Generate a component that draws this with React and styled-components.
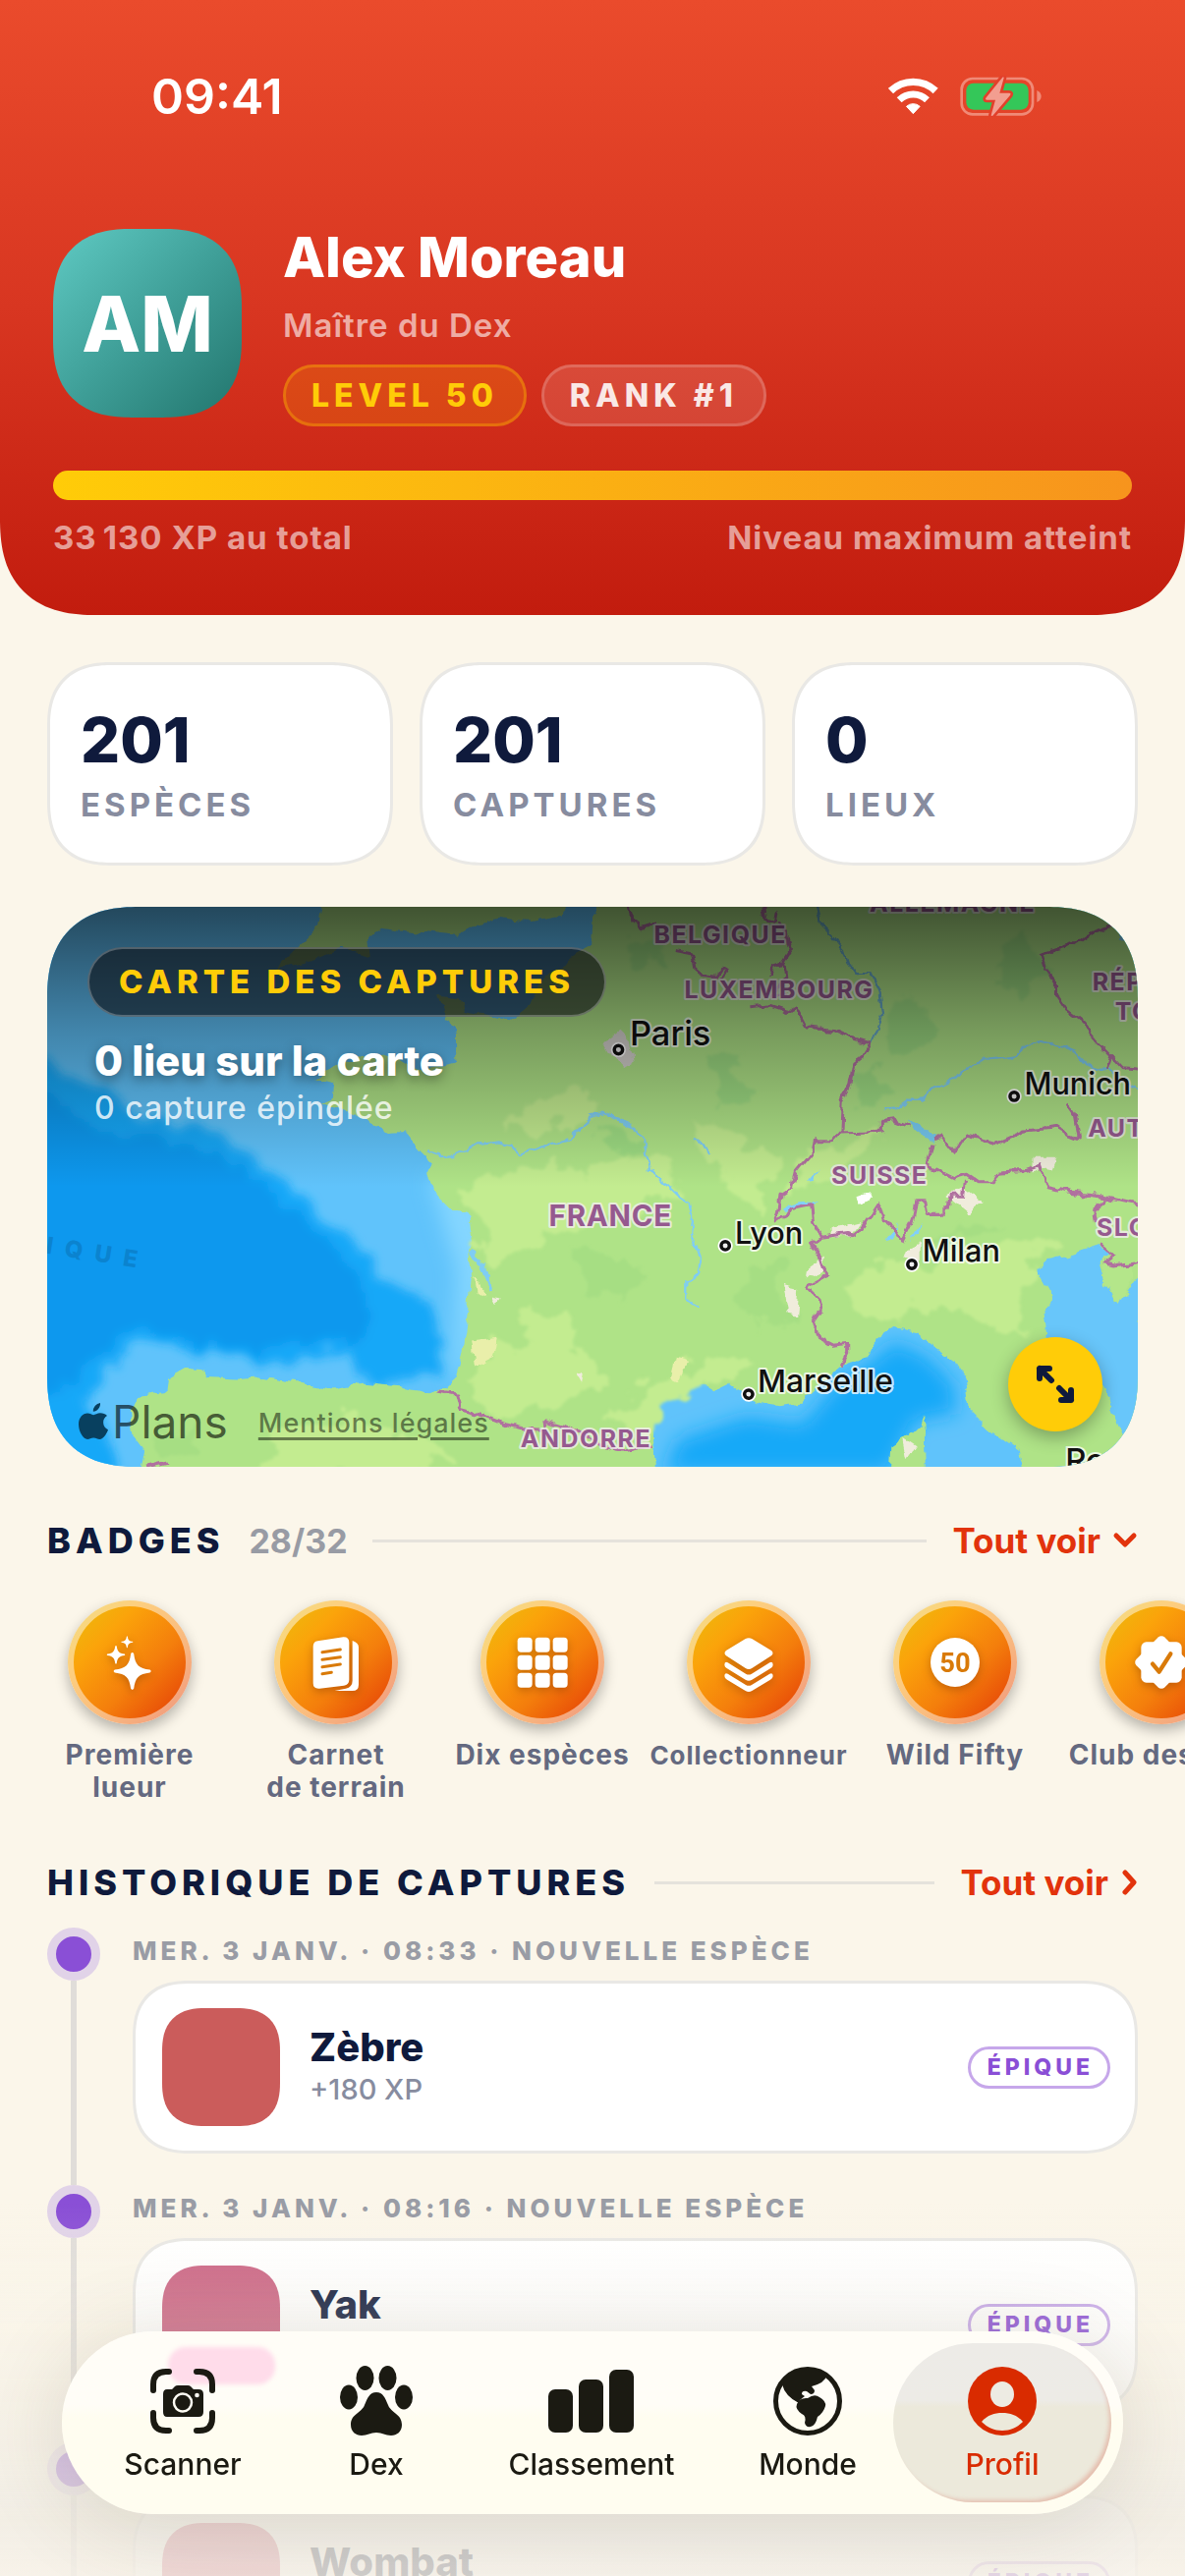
import React from "react";
import styled, { createGlobalStyle, css } from "styled-components";

const ink = "#0f1a3c";
const red = "#e2330c";
const purple = "#8a4fd6";
const cream = "#fbf6ea";

const smooth = (plain, continuous) => css`
  border-radius: ${plain}px;
  @supports (corner-shape: superellipse(1.3)) {
    border-radius: ${continuous}px;
    corner-shape: superellipse(1.3);
  }
`;

const GlobalStyle = createGlobalStyle`
  *, *::before, *::after { box-sizing: border-box; }
  body {
    margin: 0;
    background: ${cream};
    color: ${ink};
    font-family: Inter, "Liberation Sans", sans-serif;
  }
  button { font: inherit; border: 0; padding: 0; background: none; color: inherit; cursor: pointer; }
  a { color: inherit; text-decoration: none; }
  h1, h2, h3, p, ul, ol, dl, dd { margin: 0; padding: 0; font-weight: inherit; list-style: none; }
  svg { display: block; flex: none; }
`;

const Screen = styled.div`
  height: 100vh;
  overflow: hidden;
  background: ${cream};
`;

/* ---------- header ---------- */

const Header = styled.header`
  padding: 0 54px 61px;
  color: #fff;
  background: linear-gradient(180deg, #ea4b2c 0%, #d83621 50%, #c21c0e 100%);
  border-radius: 0 0 84px 84px;
  @supports (corner-shape: superellipse(1.3)) {
    border-radius: 0 0 98px 98px;
    corner-shape: superellipse(1.3);
  }
`;

const StatusBar = styled.div`
  display: flex;
  justify-content: space-between;
  align-items: center;
  height: 196px;
  padding: 0 92px 0 100px;
`;

const Clock = styled.time`
  font-size: 50px;
  font-weight: 600;
`;

const StatusIcons = styled.div`
  display: flex;
  align-items: center;
  gap: 22px;
`;

const Identity = styled.div`
  display: flex;
  align-items: flex-start;
  gap: 42px;
  margin-top: 37px;
`;

const Avatar = styled.div`
  display: grid;
  place-items: center;
  width: 192px;
  height: 192px;
  font-size: 78px;
  font-weight: 800;
  background: linear-gradient(135deg, #5fcac3 0%, #3f9f98 50%, #22756d 100%);
  ${smooth(66, 80)}
`;

const IdentityText = styled.div`
  display: flex;
  flex-direction: column;
  gap: 22px;
`;

const Name = styled.h1`
  font-size: 56px;
  font-weight: 800;
  line-height: 58px;
`;

const Title = styled.p`
  font-size: 33px;
  font-weight: 600;
  line-height: 36px;
  letter-spacing: 1px;
  color: rgba(255, 255, 255, 0.6);
`;

const Pills = styled.div`
  display: flex;
  gap: 15px;
`;

const Pill = styled.span`
  padding: 0 26px;
  font-size: 32px;
  font-weight: 800;
  line-height: 57px;
  letter-spacing: 5px;
  border-radius: 31px;
  border: 3px solid ${(p) => (p.$gold ? "rgba(255,190,0,.35)" : "rgba(255,255,255,.18)")};
  background: ${(p) => (p.$gold ? "rgba(255,190,0,.18)" : "rgba(255,255,255,.12)")};
  color: ${(p) => (p.$gold ? "#ffcc08" : "rgba(255,255,255,.88)")};
`;

const XpBar = styled.div`
  height: 30px;
  margin-top: 45px;
  border-radius: 15px;
  background: linear-gradient(90deg, #ffcc08, #f7941d);
`;

const XpLegend = styled.div`
  display: flex;
  justify-content: space-between;
  margin-top: 20px;
  font-size: 33px;
  font-weight: 700;
  line-height: 36px;
  letter-spacing: 1px;
  color: rgba(255, 255, 255, 0.58);
`;

/* ---------- content ---------- */

const Content = styled.main`
  display: flex;
  flex-direction: column;
  padding: 48px 48px 0;
`;

const Stats = styled.dl`
  display: grid;
  grid-template-columns: repeat(3, 1fr);
  gap: 27px;
`;

const panel = css`
  background: #fff;
  border: 3px solid #e9e8e5;
`;

const StatCard = styled.div`
  display: flex;
  flex-direction: column-reverse;
  justify-content: center;
  gap: 14px;
  height: 207px;
  padding: 4px 31px 0;
  ${panel}
  ${smooth(56, 66)}
`;

const StatValue = styled.dd`
  font-size: 63px;
  font-weight: 800;
  line-height: 64px;
`;

const StatLabel = styled.dt`
  font-size: 33px;
  font-weight: 700;
  line-height: 40px;
  letter-spacing: 4px;
  color: #878c9f;
`;

const MapCard = styled.section`
  position: relative;
  height: 570px;
  margin-top: 42px;
  overflow: hidden;
  background: #5fc3fb;
  ${smooth(78, 94)}
`;

const MapArt = styled.svg`
  width: 100%;
  height: 100%;
`;

const MapOverlay = styled.div`
  position: absolute;
  inset: 0;
  display: flex;
  flex-direction: column;
  justify-content: space-between;
  padding: 41px 36px 25px 32px;
  background: linear-gradient(180deg, rgba(0, 0, 0, 0.63) 0%, rgba(0, 0, 0, 0.32) 22%, rgba(0, 0, 0, 0) 50%);
`;

const MapHeading = styled.div`
  display: flex;
  flex-direction: column;
  align-items: flex-start;
  color: #fff;
`;

const MapTag = styled.h2`
  margin-left: 9px;
  padding: 0 30px;
  font-size: 33px;
  font-weight: 800;
  line-height: 67px;
  letter-spacing: 5px;
  color: #ffcc08;
  background: rgba(12, 14, 18, 0.6);
  border: 2px solid rgba(255, 255, 255, 0.25);
  border-radius: 36px;
`;

const MapTitle = styled.p`
  margin: 20px 16px 0;
  font-size: 42px;
  font-weight: 800;
  line-height: 50px;
  text-shadow: 0 4px 12px rgba(0, 0, 0, 0.4);
`;

const MapSub = styled.p`
  margin: 0 16px;
  font-size: 32px;
  font-weight: 500;
  line-height: 46px;
  letter-spacing: 1px;
  color: rgba(255, 255, 255, 0.8);
`;

const MapFooter = styled.div`
  display: flex;
  align-items: flex-end;
`;

const MapsBrand = styled.span`
  display: flex;
  align-items: center;
  gap: 4px;
  font-size: 46px;
  line-height: 42px;
  color: rgba(0, 0, 0, 0.6);
`;

const LegalLink = styled.a`
  margin-left: 31px;
  font-size: 27px;
  line-height: 38px;
  font-weight: 500;
  letter-spacing: 1px;
  text-decoration: underline;
  text-decoration-thickness: 3px;
  text-underline-offset: 5px;
  color: rgba(0, 0, 0, 0.48);
`;

const ExpandButton = styled.button`
  display: grid;
  place-items: center;
  width: 96px;
  height: 96px;
  margin: 0 0 11px auto;
  border-radius: 50%;
  color: ${ink};
  background: #ffcc08;
  box-shadow: 0 6px 18px rgba(0, 0, 0, 0.3);
`;

/* ---------- sections ---------- */

const SectionHead = styled.div`
  display: flex;
  align-items: center;
  height: 44px;
  margin-top: ${(p) => p.$top}px;
`;

const SectionTitle = styled.h2`
  font-size: 36px;
  font-weight: 800;
  line-height: 44px;
  letter-spacing: 5px;
`;

const Count = styled.span`
  margin-left: 25px;
  font-size: 34px;
  font-weight: 700;
  color: #989ba4;
`;

const Rule = styled.span`
  flex: 1;
  height: 3px;
  margin: 0 26px 0 25px;
  background: #e5e2dc;
`;

const SeeAll = styled.button`
  display: flex;
  align-items: center;
  gap: 12px;
  font-size: 35px;
  font-weight: 700;
  color: ${red};
`;

const BadgeList = styled.ul`
  display: flex;
  gap: 6px;
  margin: 39px -48px 0;
  padding-left: 30px;
  height: 207px;
`;

const Badge = styled.li`
  flex: none;
  display: flex;
  flex-direction: column;
  align-items: center;
  gap: 15px;
  width: 204px;
`;

const Medal = styled.div`
  display: grid;
  place-items: center;
  width: 126px;
  height: 126px;
  border: 6px solid rgba(255, 255, 255, 0.48);
  border-radius: 50%;
  background: linear-gradient(135deg, #efb50c 12%, #fba30a 30%, #f47e0c 60%, #e64507 90%) border-box;
  box-shadow: 0 6px 14px rgba(0, 0, 0, 0.28);
  svg {
    filter: drop-shadow(0 3px 4px rgba(120, 50, 0, 0.4));
  }
`;

const BadgeName = styled.span`
  font-size: ${(p) => (p.$small ? 26 : 28)}px;
  font-weight: 700;
  line-height: 33px;
  letter-spacing: 1px;
  text-align: center;
  white-space: pre;
  color: #646980;
`;

const Timeline = styled.ol`
  margin-top: 24px;
`;

const Entry = styled.li`
  display: flex;
  gap: 33px;
`;

const Rail = styled.div`
  display: flex;
  flex-direction: column;
  align-items: center;
  width: 54px;
  &::after {
    content: "";
    flex: 1;
    width: 6px;
    background: #e0ddd9;
  }
`;

const Dot = styled.span`
  width: 54px;
  height: 54px;
  border: 9px solid #e1d3e8;
  border-radius: 50%;
  background: ${purple};
`;

const EntryBody = styled.div`
  flex: 1;
  padding-bottom: 32px;
`;

const EntryDate = styled.p`
  height: 54px;
  font-size: 26px;
  font-weight: 800;
  line-height: 48px;
  letter-spacing: 4px;
  color: #999ca5;
`;

const EntryCard = styled.article`
  display: flex;
  align-items: center;
  gap: 30px;
  height: 176px;
  padding: 0 25px 0 27px;
  ${panel}
  ${smooth(48, 58)}
`;

const Thumb = styled.div`
  width: 120px;
  height: 120px;
  background: ${(p) => p.$color};
  ${smooth(36, 44)}
`;

const EntryText = styled.div`
  flex: 1;
  padding-top: 2px;
`;

const Species = styled.h3`
  font-size: 40px;
  font-weight: 800;
  line-height: 44px;
`;

const Gain = styled.p`
  font-size: 29px;
  font-weight: 500;
  line-height: 42px;
  color: #878c9f;
`;

const Rarity = styled.span`
  padding: 0 14px 0 17px;
  font-size: 23px;
  font-weight: 800;
  line-height: 37px;
  letter-spacing: 4px;
  color: ${purple};
  border: 3px solid #c6a7ea;
  border-radius: 22px;
`;

/* ---------- tab bar ---------- */

const BottomFade = styled.div`
  position: fixed;
  left: 0;
  right: 0;
  bottom: 0;
  height: 380px;
  pointer-events: none;
  background: linear-gradient(
    180deg,
    rgba(247, 243, 232, 0) 0%,
    rgba(246, 242, 232, 0.22) 35%,
    rgba(243, 239, 230, 0.72) 68%,
    rgba(240, 236, 228, 0.82) 85%,
    rgba(246, 241, 232, 0.84) 100%
  );
`;

const TabBar = styled.nav`
  position: fixed;
  left: 63px;
  right: 63px;
  bottom: 63px;
  display: grid;
  grid-template-columns: 222fr 172fr 266fr 174fr 222fr;
  height: 186px;
  padding: 12px;
  border-radius: 93px;
  color: #1b1a12;
  background: linear-gradient(180deg, #fffdf7 0%, #fffdf7 40%, #fffdf0 48%, #fffdf0 100%);
  box-shadow: 0 10px 90px rgba(80, 70, 40, 0.16);
`;

const Glow = styled.span`
  position: absolute;
  left: 108px;
  top: 16px;
  width: 109px;
  height: 38px;
  border-radius: 18px;
  background: #ffdcea;
  filter: blur(2px);
`;

const Tab = styled.a`
  position: relative;
  display: flex;
  flex-direction: column;
  align-items: center;
  justify-content: center;
  gap: 11px;
  border-radius: 81px;
  font-size: 30px;
  font-weight: 500;
  line-height: 34px;
  color: ${(p) => (p.$active ? "#d92b00" : "inherit")};
  background: ${(p) => (p.$active ? "linear-gradient(180deg, #edebe7 0%, #edebe6 36%, #ece9db 40%, #ece9db 100%)" : "none")};
  box-shadow: ${(p) => (p.$active ? "inset -4px -4px 4px -2px rgba(214, 110, 90, .35)" : "none")};
`;

const TabIcon = styled.span`
  display: grid;
  place-items: center;
  height: 72px;
`;

/* ---------- icons ---------- */

const Wifi = () => (
  <svg width="51" height="38" viewBox="75 86 153 114" fill="none" stroke="#fff" aria-label="Wi-Fi">
    <path d="M82.500 126.500A99 99 0 0 1 219.500 126.500" strokeWidth="22" />
    <path d="M108.500 154A61 61 0 0 1 193.500 154" strokeWidth="21" />
    <path d="M151 196L130.500 174A30 30 0 0 1 171.500 174Z" fill="#fff" strokeWidth="3" strokeLinejoin="round" />
  </svg>
);

const Battery = () => (
  <svg width="83" height="42" viewBox="293 79 249 126" aria-label="Batterie en charge">
    <rect x="298" y="88" width="217" height="109" rx="33" fill="none" stroke="#f08a77" strokeWidth="8" />
    <path d="M528 124Q541 130 541 142T528 160Z" fill="#f08a77" />
    <rect x="312" y="102" width="190" height="81" rx="22" fill="#34c759" />
    <path
      d="M423 84L372 147Q369 153 376 153H401L388 200Q389 204 393 201L446 139Q450 132 443 132H414L427 86Q426 81 423 84Z"
      fill="#f29e90"
      stroke="#e2402a"
      strokeWidth="16"
      strokeLinejoin="round"
      paintOrder="stroke"
    />
  </svg>
);

const Apple = () => (
  <svg width="30" height="38" viewBox="0 0 30 38" fill="#08405f" aria-hidden="true">
    <path d="M22 0C22.500 4.500 18.500 9 14.800 8.800 14.300 4.800 18 .6 22 0Z" />
    <path d="M29 13C26.500 14.600 25 17 25.100 20 25.200 23.600 27.200 26 30 27.200 28.500 31.500 25 37 21.500 37 19 37 18 35.600 15.200 35.600S11.200 37 9 37C5 37 0 29.500 0 21.800 0 14.800 4.300 10.500 9 10.500 11.700 10.500 13.700 12.200 15.300 12.200 16.800 12.200 19 10.300 22 10.300 24.800 10.300 27.300 11.300 29 13Z" />
  </svg>
);

const Expand = () => (
  <svg width="40" height="40" viewBox="0 0 40 40" fill="none" stroke="currentColor" strokeWidth="6" strokeLinecap="round" strokeLinejoin="round" aria-hidden="true">
    <path d="M4 14V4H14M4 4L16 16" />
    <path d="M36 26V36H26M36 36L24 24" />
  </svg>
);

const ChevronDown = () => (
  <svg width="26" height="18" viewBox="0 0 26 18" fill="none" stroke="currentColor" strokeWidth="5" strokeLinecap="round" strokeLinejoin="round" aria-hidden="true">
    <path d="M4 4L13 13L22 4" />
  </svg>
);

const ChevronRight = () => (
  <svg width="18" height="26" viewBox="0 0 18 26" fill="none" stroke="currentColor" strokeWidth="5" strokeLinecap="round" strokeLinejoin="round" aria-hidden="true">
    <path d="M5 3L14 13L5 23" />
  </svg>
);

const MedalIcon = ({ children }) => (
  <svg width="60" height="60" viewBox="-90 -90 180 180" fill="#fff" overflow="visible" aria-hidden="true">
    {children}
  </svg>
);

const Star = ({ x, y, r }) => (
  <path
    transform={`translate(${x} ${y}) scale(${r / 100})`}
    d="M-8-94Q0-106 8-94C16-34 34-16 94-8Q106 0 94 8C34 16 16 34 8 94Q0 106-8 94C-16 34-34 16-94 8Q-106 0-94-8C-34-16-16-34-8-94Z"
  />
);

const Sparkles = () => (
  <MedalIcon>
    <Star x={8} y={27} r={57} />
    <Star x={-42} y={-23} r={28} />
    <Star x={-8} y={-62} r={18} />
  </MedalIcon>
);

const Notebook = () => (
  <MedalIcon>
    <path d="M-56-65L22-77Q40-78 40-60V53Q40 68 24 71L-50 80Q-70 82-70 64V-48Q-70-63-56-65Z" />
    <path d="M50-66Q69-60 69-46V68Q69 87 50 87H-4Q16 83 30 80Q50 75 50 56Z" />
    <path d="M-42-31L13-39M-42-8L13-16M-42 14L13 6M-42 35L-14 31" stroke="#d97a08" strokeWidth="9" strokeLinecap="round" />
  </MedalIcon>
);

const GridIcon = () => (
  <MedalIcon>
    {[-76, -22, 32].map((y) => [-76, -22, 32].map((x) => <rect key={`${x}${y}`} x={x} y={y} width="45" height="45" rx="11" />))}
  </MedalIcon>
);

const Stack = () => (
  <MedalIcon>
    <path d="M-11-71Q0-78 11-71L69-36Q78-28 69-20L11 17Q0 25-11 17L-69-20Q-78-28-69-36Z" />
    {[0, 34].map((dy) => (
      <path key={dy} transform={`translate(0 ${dy})`} d="M-74 8Q-74-4-64 1L-9 35Q0 40 9 35L64 1Q74-4 74 8Q74 14 66 19L10 53Q0 59-10 53L-66 19Q-74 14-74 8Z" />
    ))}
  </MedalIcon>
);

const Fifty = () => (
  <MedalIcon>
    <circle r="75" />
    <text y="30" textAnchor="middle" fontFamily="'Liberation Sans Narrow', Roboto, sans-serif" fontWeight="700" fontSize="82" fill="#d97a08">50</text>
  </MedalIcon>
);

const Seal = () => (
  <MedalIcon>
    <rect x="-62" y="-62" width="124" height="124" rx="16" />
    <rect x="-61" y="-61" width="122" height="122" rx="14" transform="rotate(45)" />
    <path d="M-27 5L-7 29L28-26" fill="none" stroke="#d97a08" strokeWidth="13" strokeLinecap="round" strokeLinejoin="round" />
  </MedalIcon>
);

const ScanIcon = () => (
  <svg width="68" height="68" viewBox="-1 -1 68 68" fill="none" aria-hidden="true">
    <path d="M3 22V16Q3 3 16 3H19M47 3H50Q63 3 63 16V22M63 45V50Q63 63 50 63H47M19 63H16Q3 63 3 50V45" stroke="currentColor" strokeWidth="6" strokeLinecap="round" />
    <path d="M17 21H22L25 18Q26 17 28 17H38Q40 17 41 18L44 21H49Q54 21 54 26V44Q54 49 49 49H17Q13 49 13 44V26Q13 21 17 21Z" fill="currentColor" />
    <circle cx="33" cy="34.500" r="9" fill="currentColor" stroke="#fffdf4" strokeWidth="2.500" />
    <circle cx="47.500" cy="27" r="2.300" fill="#fffdf4" />
  </svg>
);

const PawIcon = () => (
  <svg width="74" height="72" viewBox="0 0 74 72" fill="currentColor" aria-hidden="true">
    <ellipse cx="9" cy="32" rx="9" ry="12.500" />
    <ellipse cx="25.500" cy="12.500" rx="9" ry="12.500" />
    <ellipse cx="48.500" cy="12.500" rx="9" ry="12.500" />
    <ellipse cx="65" cy="32" rx="9" ry="12.500" />
    <path d="M37 27C44 27 46 33 49 40C52 48 63 49 63 60C63 67 58 71 52 71C46 71 43 68 37 68S28 71 22 71C16 71 11 67 11 60C11 49 22 48 25 40C28 33 30 27 37 27Z" />
  </svg>
);

const BarsIcon = () => (
  <svg width="88" height="64" viewBox="0 0 88 64" fill="currentColor" aria-hidden="true">
    <rect x="0" y="20" width="25" height="44" rx="7" />
    <rect x="31" y="10" width="25" height="54" rx="7" />
    <rect x="62" y="0" width="25" height="64" rx="7" />
  </svg>
);

const GlobeIcon = () => (
  <svg width="70" height="70" viewBox="0 0 70 70" fill="currentColor" aria-hidden="true">
    <circle cx="35" cy="35" r="32.500" fill="none" stroke="currentColor" strokeWidth="5" />
    <path d="M9 18Q18 2 35 2Q46 2 54 8L53 12Q50 16 45 18L39 20L42 24Q42 28 38 28L34 25Q29 24 29 28L32 30Q26 34 26 37Q12 30 9 18Z" />
    <path d="M24 38Q27 31 35 32Q42 27 47 31Q54 35 53 40Q51 47 45 51Q43 60 38 61Q33 62 32 57Q34 50 29 48Q22 43 24 38Z" />
  </svg>
);

const PersonIcon = () => (
  <svg width="70" height="70" viewBox="0 0 70 70" aria-hidden="true">
    <circle cx="35" cy="35" r="35" fill="currentColor" />
    <ellipse cx="35" cy="28" rx="12" ry="13" fill="#edebe3" />
    <path d="M14 56C20 49 27 47 35 47S50 49 56 56C50 62 43 65 35 65S20 62 14 56Z" fill="#ece9db" />
  </svg>
);

/* ---------- map ---------- */

const Country = ({ x, y, size = 65, space = 4, children }) => (
  <text x={x} y={y} fontSize={size} letterSpacing={space} fontWeight="700" fill="#95598f" stroke="#f3eef0" strokeOpacity=".8" strokeWidth="11" strokeLinejoin="round" paintOrder="stroke">
    {children}
  </text>
);

const City = ({ x, y, dx, dy, size = 80, children }) => (
  <g>
    <circle cx={x} cy={y} r="12" fill="#fff" stroke="#fff" strokeWidth="16" />
    <circle cx={x} cy={y} r="11" fill="#eee" stroke="#111" strokeWidth="9" />
    <text x={dx} y={dy} fontSize={size} fontWeight="500" fill="#111" stroke="#fff" strokeOpacity=".75" strokeWidth="11" strokeLinejoin="round" paintOrder="stroke">
      {children}
    </text>
  </g>
);

const FranceMap = () => (
  <MapArt viewBox="21 34 2900 1489" preserveAspectRatio="xMidYMid slice" fontFamily="Inter, 'Liberation Sans', sans-serif" role="img" aria-label="Carte de France">
    <defs>
      <filter id="rough" x="-5%" y="-5%" width="110%" height="110%">
        <feTurbulence type="fractalNoise" baseFrequency=".025" numOctaves="3" seed="4" result="n" />
        <feDisplacementMap in="SourceGraphic" in2="n" scale="26" xChannelSelector="R" yChannelSelector="G" />
      </filter>
      <filter id="ragged" x="-20%" y="-20%" width="140%" height="140%">
        <feTurbulence type="fractalNoise" baseFrequency=".018" numOctaves="4" seed="9" result="n" />
        <feDisplacementMap in="SourceGraphic" in2="n" scale="80" xChannelSelector="R" yChannelSelector="G" />
        <feGaussianBlur stdDeviation="13" />
      </filter>
      <filter id="soft"><feGaussianBlur stdDeviation="26" /></filter>
      <filter id="patchy" x="-10%" y="-10%" width="120%" height="120%">
        <feTurbulence type="fractalNoise" baseFrequency=".012" numOctaves="4" seed="2" result="n" />
        <feDisplacementMap in="SourceGraphic" in2="n" scale="130" xChannelSelector="R" yChannelSelector="G" />
        <feGaussianBlur stdDeviation="4" />
      </filter>
    </defs>

    <rect x="21" y="34" width="2900" height="1489" fill="#60c3fb" />
    <g filter="url(#ragged)">
      <path d="M-60 400L60 480L180 520L260 590L420 620L560 690L660 770L760 860L830 930L900 1010L1020 1070L1050 1130L1070 1280L860 1290L820 1220L620 1240L420 1215L260 1190L200 1250L120 1330L180 1420L210 1560L-60 1560Z" fill="#19a8f8" />
      <path d="M-60 460L60 560L200 640L400 660L560 740L680 850L780 940L850 1010L880 1100L840 1190L600 1210L420 1190L240 1150L180 1210L100 1280L60 1330L-60 1330Z" fill="#0c98ee" />
    </g>
    <g filter="url(#soft)">
      <path d="M2220 1240L2270 1190L2360 1230L2430 1300L2440 1380L2330 1400L2260 1540L1660 1540L1700 1450L1880 1390L2030 1410L2120 1300Z" fill="#14a9f8" />
      <path d="M1160 700L1220 900L1180 1080L1140 1250L1100 1300L1110 1000L1040 760Z" fill="#84d6ff" />
    </g>

    <g filter="url(#rough)" fill="#afe387">
      <path d="M760 10L745 85L700 130L630 200L730 175L800 145L880 165L872 115L910 88L980 98L1050 105L1110 112L1160 85L1220 65L1300 75L1380 60L1425 10Z" />
      <path d="M1500 10L1470 60L1466 135L1420 160L1400 190L1330 230L1310 290L1250 340L1180 322L1130 310L1115 275L1060 268L1085 335L1105 360L1106 445L1060 458L1000 465L960 440L920 427L870 432L800 450L735 490L785 503L780 545L750 556L800 572L840 592L890 612L930 635L970 632L1000 670L1045 715L1030 750L1060 800L1100 840L1148 852L1155 910L1140 960L1147 1010L1140 1100L1125 1220L1108 1285L1080 1312L1040 1330L960 1310L860 1300L780 1315L690 1300L600 1285L540 1290L450 1285L430 1265L390 1262L340 1290L335 1325L260 1335L240 1380L250 1440L280 1480L265 1560L1640 1560L1635 1480L1620 1380L1645 1345L1715 1300L1766 1300L1796 1320L1836 1300L1877 1330L1897 1350L1968 1362L2028 1352L2060 1320L2120 1260L2160 1247L2210 1222L2230 1180L2271 1152L2332 1165L2372 1200L2432 1240L2463 1290L2473 1370L2533 1430L2604 1480L2625 1560L2960 1560V10Z" />
      <path d="M2352 1385L2357 1560L2261 1560L2266 1470L2310 1440L2342 1410Z" />
    </g>

    <g filter="url(#patchy)" fill="#c3ec90">
      <path d="M1110 780L1240 740L1460 720L1640 690L1700 780L1640 840L1420 880L1300 940L1220 1000L1180 960L1170 860Z" />
      <path d="M1300 1090L1400 1130L1500 1300L1440 1340L1220 1380L1140 1330L1190 1240L1280 1180Z" />
      <path d="M620 1420L860 1400L1000 1440L1120 1500L900 1560L600 1560Z" />
      <path d="M2140 1060L2260 990L2500 960L2640 900L2700 940L2640 1010L2600 1120L2640 1180L2520 1140L2360 1090L2180 1130Z" />
      <path d="M2040 700L2160 660L2240 640L2200 700L2080 780L2000 800Z" />
      <path d="M1720 600L1860 640L1960 700L1920 880L1860 780L1760 700Z" />
      <path d="M1500 1400L1640 1300L1840 1220L1900 1260L1780 1300L1640 1370L1600 1440Z" />
      <path d="M1260 560L1420 520L1500 560L1380 640L1260 640Z" />
    </g>
    <g filter="url(#patchy)" fill="#9ddb82">
      <path d="M1500 640L1570 600L1590 680L1520 700Z" />
      <path d="M1440 960L1540 940L1600 1000L1560 1080L1450 1040Z" fill="#a6de83" />
      <path d="M1780 450L1860 430L1880 560L1800 580Z" />
      <path d="M2260 300L2360 290L2380 400L2280 410Z" />
      <path d="M2160 480L2240 470L2250 560L2170 560Z" />
      <path d="M2540 160L2640 120L2660 220L2560 260Z" />
      <path d="M1560 130L1640 120L1660 180L1580 190Z" />
      <path d="M2380 900L2480 860L2560 880L2440 930Z" fill="#a6de83" />
      <path d="M1860 1000L1960 980L2000 1150L1880 1160Z" fill="#a6de83" />
      <path d="M300 1420L420 1400L440 1480L320 1500Z" fill="#a6de83" />
    </g>
    <g filter="url(#rough)" fill="#f0ecdc">
      <path d="M1500 395L1540 365L1570 395L1580 440L1550 460L1520 430Z" fill="#d6d3cf" />
      <path d="M1975 1040L2020 1050L2015 1120L1990 1115Z" />
      <path d="M2045 990L2090 960L2085 1005L2040 1020Z" />
      <path d="M2110 890L2190 870L2160 910L2110 915Z" />
      <path d="M2410 800L2460 780L2510 820L2470 850Z" />
      <path d="M2310 940L2340 925L2340 980L2300 970Z" />
      <path d="M2640 705L2700 705L2690 730L2640 735Z" />
      <path d="M2175 805L2205 795L2210 815L2180 825Z" fill="#fff" />
      <path d="M1150 1190L1220 1180L1210 1230L1160 1255Z" fill="#e9efaa" />
      <path d="M1690 1230L1730 1240L1700 1300L1680 1290Z" fill="#e9efaa" />
      <path d="M1155 1010L1185 1070L1165 1060Z" fill="#e9efaa" />
      <path d="M1205 1070L1230 1075L1215 1095Z" />
      <path d="M1425 1275L1445 1270L1440 1300Z" />
      <path d="M2300 1450L2330 1470L2310 1500Z" />
    </g>

    <g filter="url(#rough)">
      <path d="M2655 1000L2685 972L2776 950L2821 935L2850 952L2818 980L2828 1022L2862 1088L2890 1060L2925 1010V1470L2880 1430L2830 1310L2740 1240L2680 1185L2670 1100L2695 1070Z" fill="#67c6fa" />
      <path d="M2825 985L2900 980L2905 1020L2870 1092L2830 1030Z" fill="#b4e68a" />
      <path d="M2308 598L2380 640L2372 656L2330 630Z" fill="#76c9ef" />
      <path d="M1975 838Q2020 805 2070 825L2030 830Q1990 835 1985 850ZM2040 762L2080 735L2060 760Z" fill="#80d0fa" />
      <path d="M2250 920L2285 875L2270 915ZM2315 920L2345 875L2335 905Z" fill="#80d0fa" />
    </g>

    <g fill="none" stroke="#7fcdf3" strokeWidth="6" strokeLinejoin="round" filter="url(#rough)">
      <path d="M1030 685L1070 698L1105 695L1150 672L1215 662L1250 668L1280 695L1345 668L1410 650L1475 592L1500 582L1540 600L1570 618" />
      <path d="M1463 592L1500 582L1550 600L1590 630L1605 660L1620 735L1660 760L1700 800L1730 820L1740 870L1735 905L1760 970L1750 1010L1720 1030L1720 1080L1750 1095" />
      <path d="M2069 34L2080 80L2110 110L2140 150L2150 180L2172 212L2215 212L2235 260L2242 320L2230 360L2212 400" stroke="#67abc9" />
      <path d="M2246 573L2280 570L2310 548L2345 548L2370 522L2420 495L2510 440L2605 428L2650 388L2690 395L2750 420L2780 450L2840 470L2925 520" />
      <path d="M1740 650L1765 665L1780 692" />
      <path d="M1145 955L1180 985L1200 1050" strokeWidth="10" />
      <path d="M2870 70L2880 120L2925 150" />
    </g>

    <g fill="none" stroke="#b0719f" strokeWidth="8" strokeLinejoin="round" filter="url(#rough)">
      <path d="M1569 34L1575 70L1600 88L1640 75M1925 34L1930 65L1960 72L1965 45M1970 72L1990 110L2000 150L1980 180L1950 190L1940 225M1690 150L1740 160L1750 215L1800 220L1820 190L1830 195L1815 225M1980 180L1985 220L1950 270L1985 270M1890 300L1940 295L1990 312L2010 300L2040 355L2110 362L2150 380L2212 397L2190 430L2165 450L2155 510L2135 550L2132 630L2110 655L2065 655L2060 680L2010 740L2000 780L1970 800L1965 840L1955 870L1985 860L2000 835L2050 825L2055 870L2080 915L2150 905L2170 910L2200 870L2232 822L2245 870L2280 895L2295 920L2320 870L2330 820L2350 820L2360 850L2400 850L2420 830L2425 800L2460 800L2465 760" />
      <path d="M2132 635L2200 632L2240 630L2240 605L2270 600L2320 620M2375 650L2400 640L2435 685L2465 640L2550 662L2620 630L2710 620L2740 640L2765 650L2755 590L2735 560M2372 660L2360 720L2400 740L2430 755L2465 745L2500 770L2530 770L2545 740L2620 735L2660 720L2680 780L2740 795L2830 805L2925 826" />
      <path d="M2860 80L2800 100L2750 135L2700 150L2660 160L2670 195L2700 230L2700 265L2730 310L2770 340L2810 390L2850 430L2880 462L2925 465M2850 430L2838 470" />
      <path d="M2840 812L2805 840L2810 870M2825 930L2860 960L2830 985L2860 990L2925 980" />
      <path d="M2080 915L2050 930L2080 970L2092 1015L2040 1045L2075 1080L2080 1110L2060 1140L2070 1180L2110 1200L2152 1195L2152 1215L2130 1255" />
      <path d="M1065 1322L1110 1330L1120 1370L1190 1390L1240 1410L1280 1420L1350 1425L1345 1400L1430 1425L1500 1470L1560 1480L1630 1465M285 1523L340 1510" />
    </g>

    <Country x={2208} y={46}>ALLEMAGNE</Country>
    <Country x={1634} y={130}>BELGIQUE</Country>
    <Country x={1715} y={278}>LUXEMBOURG</Country>
    <Country x={2800} y={255}>RÉP</Country>
    <Country x={2860} y={334}>TC</Country>
    <Country x={2788} y={646}>AUT</Country>
    <Country x={2106} y={771}>SUISSE</Country>
    <Country x={2811} y={908}>SLO</Country>
    <Country x={1355} y={884} size={77} space={2}>FRANCE</Country>
    <Country x={1280} y={1472}>ANDORRE</Country>
    <text x="16" y="955" fontSize="62" letterSpacing="32" fontWeight="800" fill="#0b83cf" transform="rotate(9 16 955)">IQUE</text>

    <City x={1540} y={414} dx={1570} dy={403} size={90}>Paris</City>
    <City x={2592} y={538} dx={2619} dy={533}>Munich</City>
    <City x={1824} y={935} dx={1850} dy={930}>Lyon</City>
    <City x={2320} y={985} dx={2348} dy={978}>Milan</City>
    <City x={1886} y={1330} dx={1910} dy={1325} size={83}>Marseille</City>
    <text x="2728" y="1537" fontSize="86" fontWeight="500" fill="#111" stroke="#fff" strokeOpacity=".75" strokeWidth="11" paintOrder="stroke">Ro</text>
  </MapArt>
);

/* ---------- data ---------- */

const stats = [
  { label: "ESPÈCES", value: "201" },
  { label: "CAPTURES", value: "201" },
  { label: "LIEUX", value: "0" },
];

const badges = [
  { name: "Première\nlueur", Icon: Sparkles },
  { name: "Carnet\nde terrain", Icon: Notebook },
  { name: "Dix espèces", Icon: GridIcon },
  { name: "Collectionneur", Icon: Stack, small: true },
  { name: "Wild Fifty", Icon: Fifty },
  { name: "Club des 100", Icon: Seal },
];

const captures = [
  { date: "MER. 3 JANV. · 08:33 · NOUVELLE ESPÈCE", name: "Zèbre", color: "#cb5c5b" },
  { date: "MER. 3 JANV. · 08:16 · NOUVELLE ESPÈCE", name: "Yak", color: "#cc6484" },
  { date: "MER. 3 JANV. · 08:00 · NOUVELLE ESPÈCE", name: "Wombat", color: "#cb5c7b" },
];

const tabs = [
  { name: "Scanner", Icon: ScanIcon },
  { name: "Dex", Icon: PawIcon },
  { name: "Classement", Icon: BarsIcon },
  { name: "Monde", Icon: GlobeIcon },
  { name: "Profil", Icon: PersonIcon, active: true },
];

export default function App() {
  return (
    <Screen>
      <GlobalStyle />
      <Header>
        <StatusBar>
          <Clock>09:41</Clock>
          <StatusIcons>
            <Wifi />
            <Battery />
          </StatusIcons>
        </StatusBar>
        <Identity>
          <Avatar>AM</Avatar>
          <IdentityText>
            <Name>Alex Moreau</Name>
            <Title>Maître du Dex</Title>
            <Pills>
              <Pill $gold>LEVEL 50</Pill>
              <Pill>RANK #1</Pill>
            </Pills>
          </IdentityText>
        </Identity>
        <XpBar />
        <XpLegend>
          <span>{"33\u202f130 XP au total"}</span>
          <span>Niveau maximum atteint</span>
        </XpLegend>
      </Header>

      <Content>
        <Stats>
          {stats.map((s) => (
            <StatCard key={s.label}>
              <StatLabel>{s.label}</StatLabel>
              <StatValue>{s.value}</StatValue>
            </StatCard>
          ))}
        </Stats>

        <MapCard>
          <FranceMap />
          <MapOverlay>
            <MapHeading>
              <MapTag>CARTE DES CAPTURES</MapTag>
              <MapTitle>0 lieu sur la carte</MapTitle>
              <MapSub>0 capture épinglée</MapSub>
            </MapHeading>
            <MapFooter>
              <MapsBrand>
                <Apple />
                Plans
              </MapsBrand>
              <LegalLink href="#mentions">Mentions légales</LegalLink>
              <ExpandButton type="button" aria-label="Agrandir la carte">
                <Expand />
              </ExpandButton>
            </MapFooter>
          </MapOverlay>
        </MapCard>

        <SectionHead $top={53}>
          <SectionTitle>BADGES</SectionTitle>
          <Count>28/32</Count>
          <Rule />
          <SeeAll type="button">
            Tout voir <ChevronDown />
          </SeeAll>
        </SectionHead>
        <BadgeList>
          {badges.map(({ name, Icon, small }) => (
            <Badge key={name}>
              <Medal>
                <Icon />
              </Medal>
              <BadgeName $small={small}>{name}</BadgeName>
            </Badge>
          ))}
        </BadgeList>

        <SectionHead $top={58}>
          <SectionTitle>HISTORIQUE DE CAPTURES</SectionTitle>
          <Rule />
          <SeeAll type="button">
            Tout voir <ChevronRight />
          </SeeAll>
        </SectionHead>
        <Timeline>
          {captures.map((c) => (
            <Entry key={c.name}>
              <Rail>
                <Dot />
              </Rail>
              <EntryBody>
                <EntryDate>{c.date}</EntryDate>
                <EntryCard>
                  <Thumb $color={c.color} />
                  <EntryText>
                    <Species>{c.name}</Species>
                    <Gain>+180 XP</Gain>
                  </EntryText>
                  <Rarity>ÉPIQUE</Rarity>
                </EntryCard>
              </EntryBody>
            </Entry>
          ))}
        </Timeline>
      </Content>

      <BottomFade />
      <TabBar>
        <Glow />
        {tabs.map(({ name, Icon, active }) => (
          <Tab key={name} href={`#${name.toLowerCase()}`} $active={active} aria-current={active ? "page" : undefined}>
            <TabIcon>
              <Icon />
            </TabIcon>
            {name}
          </Tab>
        ))}
      </TabBar>
    </Screen>
  );
}
